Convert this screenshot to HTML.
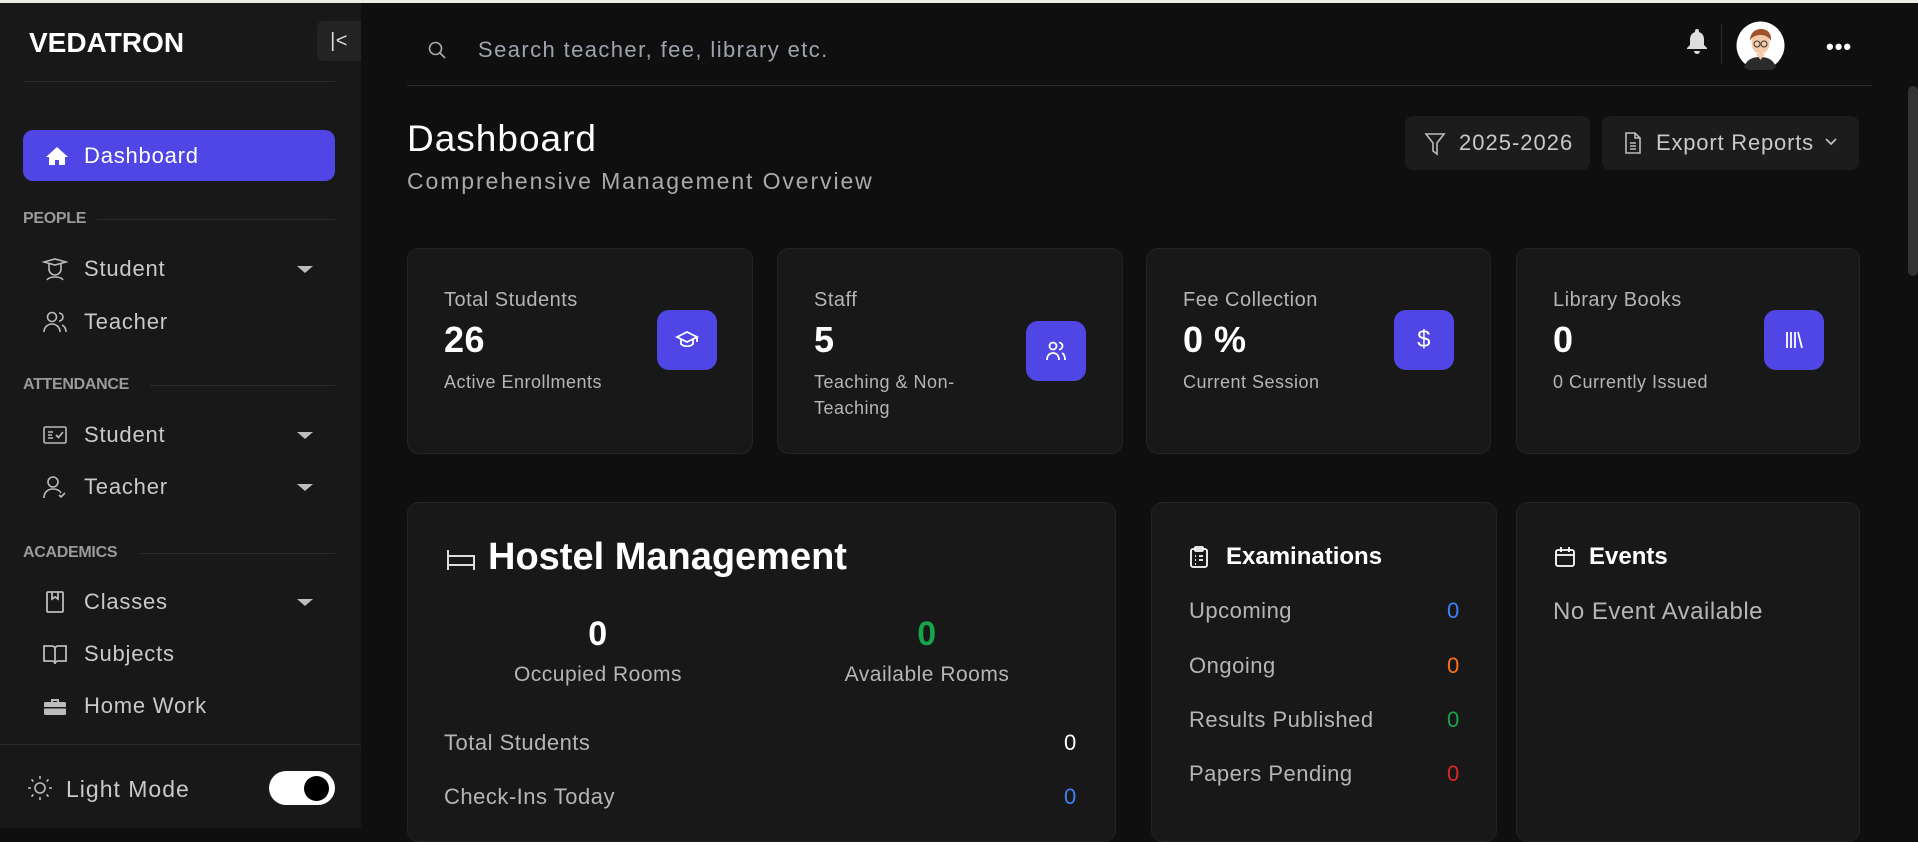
<!DOCTYPE html>
<html><head><meta charset="utf-8">
<style>
*{margin:0;padding:0;box-sizing:border-box}
body{width:1918px;height:828px;overflow:hidden;background:#0f0f0f;font-family:"Liberation Sans",sans-serif;position:relative;color:#fff;letter-spacing:0.5px}
.a{position:absolute;white-space:nowrap}
.side{position:absolute;left:0;top:3px;width:361px;height:825px;background:#181818}
.lbl{position:absolute;left:23px;font-size:16px;font-weight:bold;color:#9a9a9a;letter-spacing:-0.3px}
.ln{position:absolute;height:1px;background:#2c2c2c;right:26px}
.it{position:absolute;left:84px;font-size:22px;color:#c9c9c9;transform:translateY(-50%);letter-spacing:0.8px}
.ic{position:absolute;left:42px;width:26px;height:26px;transform:translateY(-50%)}
.car{position:absolute;left:297px;width:0;height:0;border-left:8px solid transparent;border-right:8px solid transparent;border-top:7px solid #bdbdbd}
.card{position:absolute;background:#181818;border:1px solid #242424;border-radius:12px}
.cl{position:absolute;left:36px;font-size:20px;color:#b5b5b5}
.cn{position:absolute;left:36px;font-size:36px;font-weight:bold;color:#fff}
.cs{position:absolute;left:36px;font-size:18px;color:#b5b5b5;line-height:26px}
.ib{position:absolute;width:60px;height:60px;background:#4f46e5;border-radius:12px;display:flex;align-items:center;justify-content:center}
.row{position:absolute;font-size:22px;color:#b5b5b5;transform:translateY(-50%)}
</style></head><body>
<div class="a" style="left:0;top:0;width:1918px;height:3px;background:#f0ece8"></div>
<div class="side">
  <div class="a" style="left:29px;top:24px;font-size:28px;font-weight:bold;letter-spacing:0px;color:#fff">VEDATRON</div>
  <div class="a" style="left:317px;top:18px;width:44px;height:40px;background:#232323;border-radius:6px 0 0 6px;color:#ddd;font-size:20px;text-align:center;line-height:40px">|&lt;</div>
  <div class="a" style="left:24px;top:78px;width:311px;height:1px;background:#2c2c2c"></div>
  <div class="a" style="left:23px;top:127px;width:312px;height:51px;background:#4f46e5;border-radius:10px"></div>
  <svg class="a" style="left:45px;top:143px" width="24" height="20" viewBox="0 0 24 20"><path d="M12 1L1 11h3v8h6v-5h4v5h6v-8h3z" fill="#fff"/></svg>
  <div class="a" style="left:84px;top:140px;font-size:22px;color:#fff;letter-spacing:0.8px">Dashboard</div>

  <div class="lbl" style="top:207px">PEOPLE</div><div class="ln" style="left:97px;top:216px"></div>
  <svg class="ic" style="top:266px" viewBox="0 0 26 26" fill="none" stroke="#bbb" stroke-width="1.6"><path d="M2 6l11-3 11 3-11 3zM7 8v5a6 6 0 0012 0V8M5 24c2-4 14-4 16 0"/></svg>
  <div class="it" style="top:266px">Student</div><div class="car" style="top:263px"></div>
  <svg class="ic" style="top:319px" viewBox="0 0 26 26" fill="none" stroke="#bbb" stroke-width="1.6"><circle cx="10" cy="8" r="4.5"/><path d="M2 23c0-5 4-8 8-8s8 3 8 8M17 4a4 4 0 010 8M20 16c2 1 4 3 4 7"/></svg>
  <div class="it" style="top:319px">Teacher</div>

  <div class="lbl" style="top:373px">ATTENDANCE</div><div class="ln" style="left:150px;top:382px"></div>
  <svg class="ic" style="top:432px" viewBox="0 0 26 26" fill="none" stroke="#bbb" stroke-width="1.6"><rect x="2" y="5" width="22" height="16" rx="1.5"/><path d="M6 10h5M6 13h4M6 16h5M14 13l2.5 2.5L21 10"/></svg>
  <div class="it" style="top:432px">Student</div><div class="car" style="top:429px"></div>
  <svg class="ic" style="top:484px" viewBox="0 0 26 26" fill="none" stroke="#bbb" stroke-width="1.6"><circle cx="11" cy="8" r="5"/><path d="M2 24c0-6 4-9 9-9s7 2 8 4M17 21l2 2 4-4"/></svg>
  <div class="it" style="top:484px">Teacher</div><div class="car" style="top:481px"></div>

  <div class="lbl" style="top:541px">ACADEMICS</div><div class="ln" style="left:141px;top:550px"></div>
  <svg class="ic" style="top:599px" viewBox="0 0 26 26" fill="none" stroke="#bbb" stroke-width="1.8"><rect x="5" y="3" width="16" height="20" rx="1"/><path d="M10 3v7l3-2 3 2V3"/></svg>
  <div class="it" style="top:599px">Classes</div><div class="car" style="top:596px"></div>
  <svg class="ic" style="top:651px" viewBox="0 0 26 26" fill="none" stroke="#bbb" stroke-width="1.8"><path d="M2 5h8a3 3 0 013 3v15a3 3 0 00-3-3H2zM24 5h-8a3 3 0 00-3 3v15a3 3 0 013-3h8z"/></svg>
  <div class="it" style="top:651px">Subjects</div>
  <svg class="ic" style="top:703px" viewBox="0 0 26 26"><path d="M9 6h8v3h-2V8h-4v1H9z" fill="#bbb"/><rect x="2" y="9" width="22" height="13" rx="1.5" fill="#bbb"/><rect x="2" y="14" width="22" height="1.5" fill="#181818"/></svg>
  <div class="it" style="top:703px">Home Work</div>

  <div class="a" style="left:0;top:741px;width:361px;height:1px;background:#2a2a2a"></div>
  <svg class="a" style="left:26px;top:771px" width="28" height="28" viewBox="0 0 28 28" fill="none" stroke="#bbb" stroke-width="1.6"><circle cx="14" cy="14" r="5"/><path d="M14 2v3M14 23v3M2 14h3M23 14h3M5.5 5.5l2 2M20.5 20.5l2 2M5.5 22.5l2-2M20.5 7.5l2-2"/></svg>
  <div class="a" style="left:66px;top:773px;font-size:23px;color:#c9c9c9;letter-spacing:1px">Light Mode</div>
  <div class="a" style="left:269px;top:768px;width:66px;height:34px;background:#fff;border-radius:17px"></div>
  <div class="a" style="left:304px;top:773px;width:25px;height:25px;background:#000;border-radius:50%"></div>
</div>

<!-- header -->
<svg class="a" style="left:427px;top:40px" width="20" height="20" viewBox="0 0 20 20" fill="none" stroke="#aaa" stroke-width="1.6"><circle cx="8.5" cy="8.5" r="6"/><path d="M13 13l5 5"/></svg>
<div class="a" style="left:478px;top:37px;font-size:22px;color:#9ea3ad;letter-spacing:1.4px">Search teacher, fee, library etc.</div>
<div class="a" style="left:407px;top:85px;width:1465px;height:1px;background:#2a2a2a"></div>
<svg class="a" style="left:1686px;top:28px" width="22" height="26" viewBox="0 0 22 26"><path d="M11 1a2 2 0 012 2v1a7 7 0 015 7v6l3 3v1H1v-1l3-3v-6a7 7 0 015-7V3a2 2 0 012-2zM8 23h6a3 3 0 01-6 0z" fill="#ddd"/></svg>
<div class="a" style="left:1721px;top:24px;width:1px;height:40px;background:#2a2a2a"></div>
<svg class="a" style="left:1736px;top:21px" width="49" height="49" viewBox="0 0 49 49"><circle cx="24.5" cy="24.5" r="24" fill="#fff"/><path d="M8 46c3-8 9-10 16-10s13 2 16 10a24 24 0 01-32 0z" fill="#2b2b2b"/><path d="M20 33h9l-4.5 6z" fill="#f3c9a8"/><ellipse cx="24.5" cy="22" rx="9" ry="11" fill="#f3c9a8"/><path d="M14 20c0-9 6-12 11-12s11 3 10 12c-2-4-6-6-10-6s-9 1-11 6z" fill="#a0522d"/><circle cx="21" cy="23" r="3" fill="none" stroke="#333"/><circle cx="28" cy="23" r="3" fill="none" stroke="#333"/></svg>
<div class="a" style="left:1826px;top:34px;font-size:22px;color:#fff;letter-spacing:1px;font-weight:bold">•••</div>
<div class="a" style="left:1908px;top:86px;width:10px;height:190px;background:#333;border-radius:5px"></div>

<div class="a" style="left:407px;top:118px;font-size:37px;color:#fff;letter-spacing:1px">Dashboard</div>
<div class="a" style="left:407px;top:168px;font-size:23px;color:#aaa;letter-spacing:1.9px">Comprehensive Management Overview</div>
<div class="a" style="left:1405px;top:116px;width:185px;height:54px;background:#1c1c1c;border-radius:8px"></div>
<svg class="a" style="left:1424px;top:132px" width="22" height="24" viewBox="0 0 22 24" fill="none" stroke="#bbb" stroke-width="1.6"><path d="M2 2h18l-7 9v11l-4-3v-8z"/></svg>
<div class="a" style="left:1459px;top:130px;font-size:22px;color:#c9c9c9;letter-spacing:1px">2025-2026</div>
<div class="a" style="left:1602px;top:116px;width:257px;height:54px;background:#1c1c1c;border-radius:8px"></div>
<svg class="a" style="left:1623px;top:131px" width="20" height="24" viewBox="0 0 20 24" fill="none" stroke="#bbb" stroke-width="1.6"><path d="M3 2h9l5 5v15H3zM12 2v5h5M7 12h6M7 15h6M7 18h6"/></svg>
<div class="a" style="left:1656px;top:130px;font-size:22px;color:#c9c9c9;letter-spacing:0.8px">Export Reports</div>
<svg class="a" style="left:1823px;top:136px" width="16" height="12" viewBox="0 0 16 12" fill="none" stroke="#bbb" stroke-width="1.8"><path d="M3 3l5 5 5-5"/></svg>

<!-- stat cards -->
<div class="card" style="left:407px;top:248px;width:346px;height:206px">
  <div class="cl" style="top:40px">Total Students</div><div class="cn" style="top:70px">26</div><div class="cs" style="top:120px">Active Enrollments</div>
  <div class="ib" style="left:249px;top:61px"><svg width="24" height="22" viewBox="0 0 24 22" fill="none" stroke="#fff" stroke-width="1.8"><path d="M2 8l10-5 10 5-10 5zM6 10v5c3 3 9 3 12 0v-5M22 8v5"/></svg></div>
</div>
<div class="card" style="left:777px;top:248px;width:346px;height:206px">
  <div class="cl" style="top:40px">Staff</div><div class="cn" style="top:70px">5</div><div class="cs" style="top:120px">Teaching &amp; Non-<br>Teaching</div>
  <div class="ib" style="left:248px;top:72px"><svg width="24" height="24" viewBox="0 0 24 24" fill="none" stroke="#fff" stroke-width="1.8"><circle cx="9" cy="7" r="3.5"/><path d="M3 21c0-5 3-7 6-7s6 2 6 7M15 3.5a3.5 3.5 0 010 7M18 14c2 1 3 3 3 7"/></svg></div>
</div>
<div class="card" style="left:1146px;top:248px;width:345px;height:206px">
  <div class="cl" style="top:40px">Fee Collection</div><div class="cn" style="top:70px">0 %</div><div class="cs" style="top:120px">Current Session</div>
  <div class="ib" style="left:247px;top:61px"><span style="font-size:24px;color:#fff">$</span></div>
</div>
<div class="card" style="left:1516px;top:248px;width:344px;height:206px">
  <div class="cl" style="top:40px">Library Books</div><div class="cn" style="top:70px">0</div><div class="cs" style="top:120px">0 Currently Issued</div>
  <div class="ib" style="left:247px;top:61px"><svg width="24" height="24" viewBox="0 0 24 24" fill="none" stroke="#fff" stroke-width="1.8"><path d="M5 4v16M9 4v16M13 4v16M16 4l4 16"/></svg></div>
</div>

<!-- hostel -->
<div class="card" style="left:407px;top:502px;width:709px;height:340px">
  <svg class="a" style="left:38px;top:45px" width="30" height="24" viewBox="0 0 30 24" fill="none" stroke="#ddd" stroke-width="2"><path d="M2 2v20M2 8h26v14M2 17h26"/></svg>
  <div class="a" style="left:80px;top:33px;font-size:38px;font-weight:bold;letter-spacing:0px">Hostel Management</div>
  <div class="a" style="left:90px;top:112px;width:200px;text-align:center;font-size:34px;font-weight:bold">0</div>
  <div class="a" style="left:40px;top:160px;width:300px;text-align:center;font-size:21px;color:#b5b5b5">Occupied Rooms</div>
  <div class="a" style="left:419px;top:112px;width:200px;text-align:center;font-size:34px;font-weight:bold;color:#16a34a">0</div>
  <div class="a" style="left:369px;top:160px;width:300px;text-align:center;font-size:21px;color:#b5b5b5">Available Rooms</div>
  <div class="row" style="left:36px;top:240px">Total Students</div><div class="row" style="left:656px;top:240px;color:#fff">0</div>
  <div class="row" style="left:36px;top:294px">Check-Ins Today</div><div class="row" style="left:656px;top:294px;color:#3b82f6">0</div>
</div>
<!-- exams -->
<div class="card" style="left:1151px;top:502px;width:346px;height:340px">
  <svg class="a" style="left:37px;top:42px" width="20" height="24" viewBox="0 0 20 24" fill="none" stroke="#fff" stroke-width="1.8"><rect x="2" y="4" width="16" height="18" rx="2"/><rect x="6" y="2" width="8" height="4" rx="1"/><path d="M6 11h1M10 11h4M6 15h1M10 15h4M6 19h1"/></svg>
  <div class="a" style="left:74px;top:40px;font-size:24px;font-weight:bold;letter-spacing:0px">Examinations</div>
  <div class="row" style="left:37px;top:108px">Upcoming</div><div class="row" style="left:295px;top:108px;color:#3b82f6">0</div>
  <div class="row" style="left:37px;top:163px">Ongoing</div><div class="row" style="left:295px;top:163px;color:#f97316">0</div>
  <div class="row" style="left:37px;top:217px">Results Published</div><div class="row" style="left:295px;top:217px;color:#16a34a">0</div>
  <div class="row" style="left:37px;top:271px">Papers Pending</div><div class="row" style="left:295px;top:271px;color:#dc2626">0</div>
</div>
<!-- events -->
<div class="card" style="left:1516px;top:502px;width:344px;height:340px">
  <svg class="a" style="left:37px;top:43px" width="22" height="22" viewBox="0 0 22 22" fill="none" stroke="#fff" stroke-width="1.8"><rect x="2" y="4" width="18" height="16" rx="2"/><path d="M2 9h18M7 1v5M15 1v5"/></svg>
  <div class="a" style="left:72px;top:40px;font-size:24px;font-weight:bold;letter-spacing:0px">Events</div>
  <div class="a" style="left:36px;top:95px;font-size:24px;color:#b5b5b5">No Event Available</div>
</div>
</body></html>
